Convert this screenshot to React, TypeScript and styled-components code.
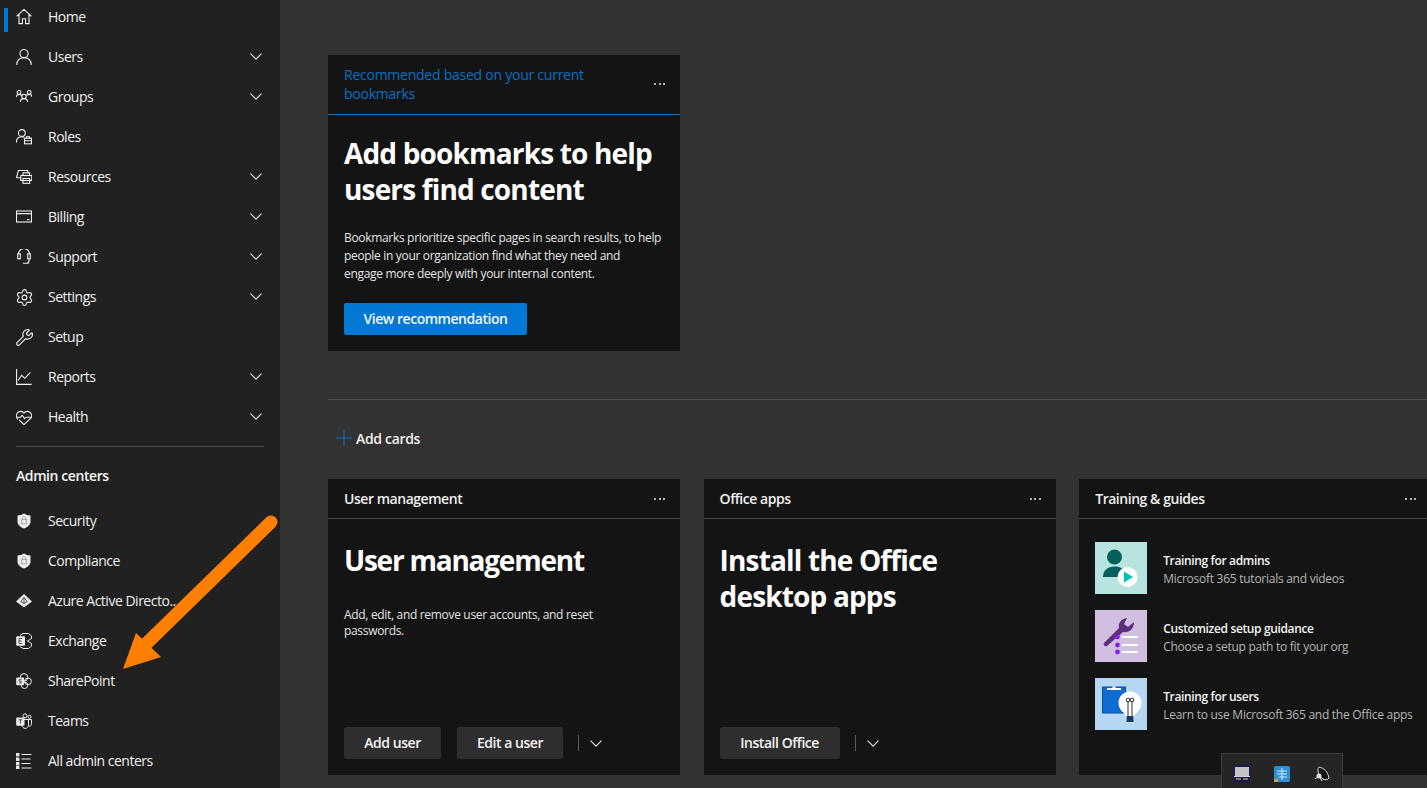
import React from "react";
import styled, { createGlobalStyle } from "styled-components";
import { Settings as Gear, Wrench } from "lucide-react";

const Global = createGlobalStyle`
  html, body { margin: 0; padding: 0; height: 100%; background: #323232; overflow: hidden; }
  #root { height: 100%; }
  * { box-sizing: border-box; }
`;

const FONT = `"Open Sans", "Noto Sans", Arial, sans-serif`;

const Page = styled.div`
  position: relative;
  display: flex;
  width: 1427px;
  height: 788px;
  overflow: hidden;
  font-family: ${FONT};
  letter-spacing: -0.02em;
  color: #fff;
`;
const Sidebar = styled.nav`
  flex: 0 0 280px;
  background: #212121;
  margin-top: -3px;
  display: flex;
  flex-direction: column;
`;
const NavRow = styled.div<{ $active?: boolean }>`
  position: relative;
  flex: 0 0 40px;
  display: flex;
  align-items: center;
  padding: 0 16px;
  font-size: 14px;
  letter-spacing: -0.035em;
  color: #f0f0f0;
  &::before {
    content: "";
    display: ${(p) => (p.$active ? "block" : "none")};
    position: absolute;
    left: 4px;
    top: 11px;
    width: 4px;
    height: 24px;
    background: #0078d4;
  }
`;
const NavIcon = styled.span`
  flex: 0 0 32px;
  height: 16px;
  display: flex;
  align-items: center;
  color: #f2f2f2;
`;
const NavLabel = styled.span`
  white-space: nowrap;
  line-height: 20px;
`;
const ChevronSlot = styled.span`
  margin-left: auto;
  margin-bottom: 2px;
  display: flex;
  padding-right: 2px;
  color: #e6e6e6;
`;
const SideDivider = styled.div`
  height: 1px;
  background: #4a4a4a;
  margin: 9px 16px 0;
`;
const SideHeading = styled.div`
  font-size: 14px;
  font-weight: 600;
  letter-spacing: -0.03em;
  color: #f4f4f4;
  padding: 19px 16px 15px;
  line-height: 20px;
`;
const Main = styled.main`
  flex: 1;
  min-width: 0;
  background: #323232;
  padding: 55px 0 0 48px;
  display: flex;
  flex-direction: column;
`;
const Card = styled.section`
  flex: none;
  width: 352px;
  height: 296px;
  background: #141414;
  display: flex;
  flex-direction: column;
`;
const CardHeader = styled.header<{ $accent?: boolean }>`
  flex: none;
  display: flex;
  align-items: center;
  justify-content: space-between;
  padding: 0 16px ${(p) => (p.$accent ? "2px" : "0")};
  height: ${(p) => (p.$accent ? "60px" : "40px")};
  border-bottom: 1px solid ${(p) => (p.$accent ? "#0078d4" : "#474747")};
  font-size: 14px;
  line-height: 19px;
  letter-spacing: ${(p) => (p.$accent ? "-0.0175em" : "-0.033em")};
  font-weight: ${(p) => (p.$accent ? 400 : 600)};
  color: ${(p) => (p.$accent ? "#0a70c4" : "#f0f0f0")};
`;
const HeaderTitle = styled.span`
  max-width: 270px;
`;
const Dots = styled.span`
  flex: 0 0 auto;
  display: flex;
  gap: 2.5px;
  margin-right: -1px;
  & > i {
    width: 2px;
    height: 2px;
    border-radius: 50%;
    background: #e8e8e8;
  }
`;
const CardBody = styled.div<{ $top?: number }>`
  flex: 1;
  display: flex;
  flex-direction: column;
  padding: ${(p) => p.$top ?? 20}px 16px 16px;
`;
const CardTitle = styled.h2<{ $track?: number }>`
  margin: 0;
  font-size: 28px;
  line-height: 36px;
  font-weight: 700;
  color: #fff;
  letter-spacing: ${(p) => p.$track ?? -0.03}em;
`;
const CardText = styled.p<{ $lh?: number; $gap?: number; $max: number }>`
  margin: ${(p) => p.$gap ?? 24}px 0 0;
  max-width: ${(p) => p.$max}px;
  font-size: 12px;
  line-height: ${(p) => p.$lh ?? 18}px;
  color: #e4e4e4;
`;
const Actions = styled.div`
  margin-top: auto;
  display: flex;
  align-items: center;
`;
const Btn = styled.button<{ $primary?: boolean; $w: number }>`
  width: ${(p) => p.$w}px;
  height: 32px;
  border: 0;
  border-radius: 2px;
  padding: 0 0 2px;
  margin-right: 16px;
  font-family: ${FONT};
  font-size: 14px;
  letter-spacing: -0.033em;
  font-weight: 600;
  color: #f4f4f4;
  background: ${(p) => (p.$primary ? "#0078d4" : "#2e2e2e")};
`;
const SplitDivider = styled.span`
  width: 1px;
  height: 16px;
  background: #5a5a5a;
  margin: 0 11px 0 -1px;
`;
const SplitChevron = styled.span`
  display: flex;
  color: #e0e0e0;
`;
const PageDivider = styled.div`
  flex: none;
  height: 1px;
  background: #4c4c4c;
  margin-top: 48px;
`;
const AddCards = styled.div`
  flex: none;
  display: flex;
  align-items: center;
  height: 40px;
  margin-top: 18px;
  padding-left: 8px;
  gap: 4px;
  font-size: 14px;
  font-weight: 600;
  color: #f0f0f0;
`;
const CardRow = styled.div`
  flex: none;
  display: flex;
  gap: 23.6px;
  margin-top: 21px;
`;
const GuideList = styled.div`
  display: flex;
  flex-direction: column;
  gap: 16px;
  padding: 23px 16px 0;
`;
const GuideRow = styled.div`
  display: flex;
  align-items: center;
  gap: 16px;
  height: 52px;
  & > svg {
    flex: none;
  }
`;
const GuideText = styled.div`
  display: flex;
  flex-direction: column;
  padding-top: 4px;
  font-size: 12px;
  line-height: 18px;
  white-space: nowrap;
`;
const GuideTitle = styled.span`
  font-weight: 600;
  letter-spacing: -0.03em;
  color: #f4f4f4;
`;
const GuideSub = styled.span`
  letter-spacing: -0.022em;
  color: #b4b4b4;
`;
const Tray = styled.div`
  position: absolute;
  left: 1221px;
  top: 753px;
  width: 122px;
  height: 36px;
  background: #252525;
  border: 1px solid #3f3f3f;
  display: flex;
  align-items: center;
  justify-content: space-between;
  padding: 6px 12px 0;
`;
const ArrowLayer = styled.svg`
  position: absolute;
  left: 0;
  top: 0;
  pointer-events: none;
`;

const Line = (p: React.SVGProps<SVGSVGElement>) => (
  <svg width="16" height="16" viewBox="0 0 16 16" fill="none" stroke="currentColor" strokeWidth="1.1" {...p} />
);

const Chevron = () => (
  <svg width="12" height="7" viewBox="0 0 12 7" fill="none" stroke="currentColor" strokeWidth="1.1">
    <path d="M.5.7 6 6.2 11.5.7" />
  </svg>
);

const I = {
  home: (
    <Line>
      <path d="M.6 7.4 8 .4l7.4 7M3 5.6v9h3.4V9.8h3.2v4.8H13v-9" />
    </Line>
  ),
  users: (
    <Line>
      <circle cx="8" cy="4.6" r="4.1" />
      <path d="M.8 16c0-4.6 3-7.2 7.2-7.2s7.2 2.6 7.2 7.2" />
    </Line>
  ),
  groups: (
    <Line>
      <circle cx="3" cy="3.4" r="1.9" />
      <circle cx="13.2" cy="3.4" r="1.9" />
      <circle cx="8" cy="7.4" r="2.2" />
      <path d="M.3 8c0-1.4 1-2.6 2.7-2.6 1 0 2 .5 3.2 1M15.9 8c0-1.4-1-2.6-2.7-2.6-1 0-2 .5-3.2 1M4.4 13c0-2 1.4-3.4 3.6-3.4s3.6 1.4 3.6 3.4" />
    </Line>
  ),
  roles: (
    <Line>
      <circle cx="5.8" cy="4" r="3.4" />
      <path d="M.4 13.4c0-3.4 2.2-5.6 5.4-5.6 1 0 1.6.2 2.2.4" />
      <rect x="8.5" y="9.2" width="7" height="5.6" />
      <path d="M10.5 9.2V7.8h3v1.4M8.5 11.8h7" />
    </Line>
  ),
  resources: (
    <Line>
      <path d="M.4 8.8 2.4 1.5h9.4v3M5 8.8H.4" />
      <rect x="4.8" y="6.5" width="11" height="5" />
      <rect x="7" y="3.8" width="6.6" height="2.7" />
      <rect x="7" y="9.5" width="6.6" height="4.8" />
    </Line>
  ),
  billing: (
    <Line>
      <rect x=".5" y="2" width="15" height="11" />
      <path d="M.5 4.6h15M11 10.6h2.4" />
    </Line>
  ),
  support: (
    <Line>
      <path d="M2.5 4.8v.5C2.5 2.2 5-.5 8-.5s5.5 2.7 5.5 5.8v-.5" />
      <rect x="1.7" y="4.8" width="2.6" height="5" />
      <rect x="11.7" y="4.8" width="2.6" height="5" />
      <path d="M13 9.8v2.5c0 1.2-1 2-2.2 2H7" />
    </Line>
  ),
  settings: <Gear size={19} strokeWidth={1.4} style={{ marginLeft: -1.5, flex: "none" }} />,
  setup: <Wrench size={19} strokeWidth={1.4} style={{ marginLeft: -1.5, flex: "none" }} />,
  reports: (
    <Line>
      <path d="M.6 0v15.4h15M2 11.5l3.6-5.2 3.2 3 5.6-6" />
    </Line>
  ),
  health: (
    <Line>
      <path d="M2 10.4.9 8.9C.1 7.6.3 5 1.4 3.8 3.2 1.8 6.4 1.9 8 4c1.6-2.1 4.8-2.2 6.6-.2 1.1 1.2 1.3 3.8.5 5.1L8 15.6 3.2 11" />
      <path d="M.8 8.2h3.6l1.8-1.9 2.4 3.3 1.6-1.4h5" />
    </Line>
  ),
  shield: (
    <svg width="16" height="16" viewBox="0 0 16 16">
      <path d="M8 .5c1.8 1.3 4 1.9 6.5 1.9v6c0 3.2-2.5 5.4-6.5 7.1-4-1.7-6.5-3.9-6.5-7.1v-6C4 2.4 6.2 1.8 8 .5z" fill="#ececec" />
      <rect x="5.4" y="6.4" width="5.2" height="4.4" fill="none" stroke="#a8a8a8" />
      <path d="M6.4 6.4V5c0-2 3.2-2 3.2 0v1.4" fill="none" stroke="#a8a8a8" />
    </svg>
  ),
  azure: (
    <svg width="16" height="16" viewBox="0 0 16 16">
      <path d="M8 1l8 7.5-8 6-8-6z" fill="#ececec" />
      <path d="M8 4.5 4.8 8.5 8 10.5l3.2-2zM8 4.5v6" fill="none" stroke="#444" strokeWidth=".9" />
    </svg>
  ),
  exchange: (
    <svg width="16" height="16" viewBox="0 0 16 16">
      <path d="M4 2.5l3-2h5.5l3 2.5v2.5L11.5 8l4 2.5V13l-3 2.5H7l-3-2" fill="none" stroke="#ececec" />
      <rect x=".2" y="3.2" width="8.8" height="9.6" rx="1" fill="#ececec" />
      <path d="M3 5.5h3M3 8h2.6M3 10.5h3M3 5.5v5" stroke="#555" fill="none" />
    </svg>
  ),
  sharepoint: (
    <svg width="16" height="16" viewBox="0 0 16 16" fill="none" stroke="#ececec">
      <circle cx="8" cy="4.4" r="3.8" />
      <circle cx="12" cy="8.4" r="3.4" />
      <circle cx="8.5" cy="12.3" r="3.2" />
      <rect x=".2" y="4.4" width="7.8" height="7.8" rx="1" fill="#ececec" stroke="none" />
      <path d="M5.6 6.4H3.2v1.8h2v1.8H2.8" stroke="#555" />
    </svg>
  ),
  teams: (
    <svg width="16" height="16" viewBox="0 0 16 16" fill="none" stroke="#ececec">
      <circle cx="9" cy="2.8" r="2" />
      <circle cx="13.5" cy="3.8" r="1.5" />
      <path d="M11 6.5h4.5v4.3c0 1.5-1 2.5-2.3 2.5M6 7v5c0 2 1.5 3.4 3.2 3.4S12.5 14 12.5 12V6.5H6" />
      <rect x=".2" y="4.5" width="8.3" height="8.3" rx="1" fill="#ececec" stroke="none" />
      <path d="M2.5 6.8h3.8M4.4 6.8v4" stroke="#555" />
    </svg>
  ),
  all: (
    <svg width="16" height="16" viewBox="0 0 16 16" fill="none" stroke="#ececec">
      <path d="M5.5 1.5h10M5.5 6h9M5.5 10.5h9M5.5 15h10" />
      <rect x=".5" y=".5" width="2.4" height="2.4" fill="#ececec" />
      <rect x=".5" y="5" width="2.4" height="2.4" fill="#ececec" />
      <rect x=".5" y="9.5" width="2.4" height="2.4" fill="#ececec" />
      <rect x=".5" y="13.4" width="2.4" height="2.4" fill="#ececec" />
    </svg>
  ),
};

const primaryNav: { label: string; icon: React.ReactNode; more?: boolean; active?: boolean }[] = [
  { label: "Home", icon: I.home, active: true },
  { label: "Users", icon: I.users, more: true },
  { label: "Groups", icon: I.groups, more: true },
  { label: "Roles", icon: I.roles },
  { label: "Resources", icon: I.resources, more: true },
  { label: "Billing", icon: I.billing, more: true },
  { label: "Support", icon: I.support, more: true },
  { label: "Settings", icon: I.settings, more: true },
  { label: "Setup", icon: I.setup },
  { label: "Reports", icon: I.reports, more: true },
  { label: "Health", icon: I.health, more: true },
];
const adminNav = [
  { label: "Security", icon: I.shield },
  { label: "Compliance", icon: I.shield },
  { label: "Azure Active Directo..", icon: I.azure },
  { label: "Exchange", icon: I.exchange },
  { label: "SharePoint", icon: I.sharepoint },
  { label: "Teams", icon: I.teams },
  { label: "All admin centers", icon: I.all },
];

const More = () => (
  <Dots>
    <i />
    <i />
    <i />
  </Dots>
);

const Split = () => (
  <>
    <SplitDivider />
    <SplitChevron>
      <Chevron />
    </SplitChevron>
  </>
);

const ThumbAdmins = () => (
  <svg width="52" height="52" viewBox="0 0 52 52">
    <rect width="52" height="52" fill="#b8e4df" />
    <circle cx="19.5" cy="15" r="7.5" fill="#05605c" />
    <path d="M8 35c0-7 5-10.5 11.5-10.5S30 27 31 35z" fill="#05605c" />
    <circle cx="32.5" cy="35" r="10" fill="#fff" />
    <path d="M29 29.5v11l9-5.5z" fill="#00c4b0" />
  </svg>
);
const ThumbSetup = () => (
  <svg width="52" height="52" viewBox="0 0 52 52">
    <rect width="52" height="52" fill="#d1bfe0" />
    <path d="M9 33l15-15c-1-5 2-9 8-10l-3 6 4 3 6-5c0 7-5 11-11 10L12 36c-2 1-4-1-3-3z" fill="#5c2e7e" />
    <circle cx="22.5" cy="27" r="2.4" fill="#8a1ff0" />
    <circle cx="22.5" cy="35" r="2.4" fill="#8a1ff0" />
    <circle cx="22.5" cy="42" r="2.4" fill="#8a1ff0" />
    <path d="M27 27h16M27 35h16M27 42h16" stroke="#fff" strokeWidth="2" />
  </svg>
);
const ThumbUsers = () => (
  <svg width="52" height="52" viewBox="0 0 52 52">
    <rect width="52" height="52" fill="#b6d7f3" />
    <rect x="7.5" y="9" width="23" height="26" fill="#0f6cd0" stroke="#0a4f9e" />
    <path d="M12 10h5.5V8.500h3V10H26v2H12z" fill="#fff" />
    <circle cx="35" cy="25" r="11.5" fill="#fff" />
    <path d="M31 42c0-6-3-8-4-12h16c-1 4-4 6-4 12z" fill="#fff" />
    <path d="M33 39V23M37 39V23" stroke="#333" />
    <circle cx="33" cy="22" r="1.8" fill="none" stroke="#333" />
    <circle cx="37" cy="22" r="1.8" fill="none" stroke="#333" />
    <rect x="31.5" y="38" width="7" height="6" fill="#1b3b5e" />
  </svg>
);

export default function App() {
  return (
    <Page>
      <Global />
      <Sidebar>
        {primaryNav.map((n) => (
          <NavRow key={n.label} $active={n.active}>
            <NavIcon>{n.icon}</NavIcon>
            <NavLabel>{n.label}</NavLabel>
            {n.more && (
              <ChevronSlot>
                <Chevron />
              </ChevronSlot>
            )}
          </NavRow>
        ))}
        <SideDivider />
        <SideHeading>Admin centers</SideHeading>
        {adminNav.map((n) => (
          <NavRow key={n.label}>
            <NavIcon>{n.icon}</NavIcon>
            <NavLabel>{n.label}</NavLabel>
          </NavRow>
        ))}
      </Sidebar>
      <Main>
        <Card>
          <CardHeader $accent>
            <HeaderTitle>Recommended based on your current bookmarks</HeaderTitle>
            <More />
          </CardHeader>
          <CardBody $top={20}>
            <CardTitle>Add bookmarks to help users find content</CardTitle>
            <CardText $gap={22} $max={320}>
              Bookmarks prioritize specific pages in search results, to help
              <br />
              people in your organization find what they need and
              <br />
              engage more deeply with your internal content.
            </CardText>
            <Actions>
              <Btn $primary $w={183}>
                View recommendation
              </Btn>
            </Actions>
          </CardBody>
        </Card>
        <PageDivider />
        <AddCards>
          <svg width="16" height="16" viewBox="0 0 16 16" stroke="#0f6cbd" strokeWidth="1">
            <path d="M8 0v16M0 8h16" />
          </svg>
          Add cards
        </AddCards>
        <CardRow>
          <Card>
            <CardHeader>
              User management
              <More />
            </CardHeader>
            <CardBody $top={23}>
              <CardTitle $track={-0.044}>User management</CardTitle>
              <CardText $lh={16} $gap={29} $max={260}>
                Add, edit, and remove user accounts, and reset passwords.
              </CardText>
              <Actions>
                <Btn $w={97}>Add user</Btn>
                <Btn $w={106}>Edit a user</Btn>
                <Split />
              </Actions>
            </CardBody>
          </Card>
          <Card>
            <CardHeader>
              Office apps
              <More />
            </CardHeader>
            <CardBody $top={23}>
              <CardTitle>
                Install the Office
                <br />
                desktop apps
              </CardTitle>
              <Actions>
                <Btn $w={120}>Install Office</Btn>
                <Split />
              </Actions>
            </CardBody>
          </Card>
          <Card>
            <CardHeader>
              Training &amp; guides
              <More />
            </CardHeader>
            <GuideList>
              <GuideRow>
                <ThumbAdmins />
                <GuideText>
                  <GuideTitle>Training for admins</GuideTitle>
                  <GuideSub>Microsoft 365 tutorials and videos</GuideSub>
                </GuideText>
              </GuideRow>
              <GuideRow>
                <ThumbSetup />
                <GuideText>
                  <GuideTitle>Customized setup guidance</GuideTitle>
                  <GuideSub>Choose a setup path to fit your org</GuideSub>
                </GuideText>
              </GuideRow>
              <GuideRow>
                <ThumbUsers />
                <GuideText>
                  <GuideTitle>Training for users</GuideTitle>
                  <GuideSub>Learn to use Microsoft 365 and the Office apps</GuideSub>
                </GuideText>
              </GuideRow>
            </GuideList>
          </Card>
        </CardRow>
      </Main>
      <Tray>
        <svg width="16" height="16" viewBox="0 0 16 16">
          <rect x=".5" y=".5" width="15" height="15" fill="#c4c4c4" stroke="#10107a" />
          <rect x="1" y="10" width="14" height="5" fill="#222" />
          <path d="M0 10.5h16M2 13h5M9 13h5" stroke="#cfcfe8" />
        </svg>
        <svg width="16" height="16" viewBox="0 0 16 16">
          <rect width="16" height="16" rx="2" fill="#2c8fd6" />
          <path d="M3 5h10M3 8h10M5 11h8M8 2v12" stroke="#d8f0ff" />
          <path d="M0 14l4-2 0 4H0z" fill="#d89a3a" />
        </svg>
        <svg width="16" height="16" viewBox="0 0 16 16">
          <path d="M5 1c5 1 9 5 10 11-1 2-4 2-6 1-3-2-5-5-5-9 0-1 0-2 1-3z" fill="#111" stroke="#ddd" />
          <circle cx="5" cy="10" r="2.5" fill="#ddd" />
          <path d="M1 13l4-3 3 5" stroke="#ddd" fill="none" />
        </svg>
      </Tray>
      <ArrowLayer width="1427" height="788" viewBox="0 0 1427 788">
        <path d="M271 522 146 644" stroke="#ff8000" strokeWidth="13" strokeLinecap="round" fill="none" />
        <path d="M123 669 136 633 161 657z" fill="#ff8000" />
      </ArrowLayer>
    </Page>
  );
}
